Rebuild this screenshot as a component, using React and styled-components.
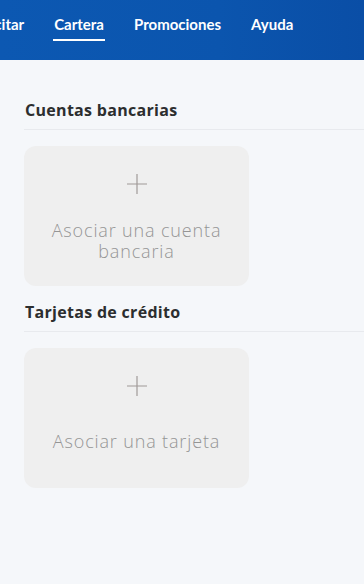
import React from "react";
import styled, { createGlobalStyle } from "styled-components";

const Global = createGlobalStyle`
  html, body { margin: 0; padding: 0; background: #f5f7fa; }
  body { font-family: "Lato", "Noto Sans", sans-serif; }
`;

const Page = styled.div`
  width: 364px;
  min-height: 584px;
  background: #f5f7fa;
  overflow: hidden;
`;

const Header = styled.header`
  height: 60px;
  background: linear-gradient(90deg, #0c58b2 0%, #0b55ae 60%, #0a4ea6 100%);
  overflow: hidden;
`;

const Nav = styled.nav`
  display: flex;
  gap: 30px;
  margin-left: -30px;
  height: 100%;
`;

const NavItem = styled.a`
  position: relative;
  display: flex;
  align-items: flex-start;
  padding-top: 15px;
  color: #ffffff;
  font-size: 15px;
  font-weight: 700;
  white-space: nowrap;
  text-decoration: none;
  line-height: 18px;
  &::after {
    content: "";
    display: ${(p) => (p.$active ? "block" : "none")};
    position: absolute;
    left: -1px;
    right: -1px;
    top: 39px;
    height: 2px;
    background: #ffffff;
  }
`;

const Main = styled.main`
  padding: 40px 0 0 24px;
`;

const Section = styled.section`
  margin-bottom: 16px;
`;

const Title = styled.h2`
  margin: 0;
  padding: 0 0 9px 1px;
  font-family: "Open Sans", "Lato", sans-serif;
  font-size: 16px;
  font-weight: 700;
  letter-spacing: 0.3px;
  color: #2c2e2f;
  line-height: 20px;
  border-bottom: 1px solid #e8eaee;
`;

const Card = styled.button`
  margin-top: 16px;
  width: 225px;
  height: 140px;
  border: none;
  border-radius: 12px;
  background: #efefef;
  display: flex;
  flex-direction: column;
  align-items: center;
  padding: 27px 6px 0;
  box-sizing: border-box;
  cursor: pointer;
  font-family: inherit;
`;

const Plus = styled.svg`
  width: 22px;
  height: 22px;
  flex: none;
`;

const CardText = styled.span`
  margin-top: ${(p) => (p.$single ? "34px" : "25px")};
  font-family: "Open Sans", "Lato", sans-serif;
  font-size: 18px;
  line-height: 21px;
  font-weight: 300;
  color: #959595;
  text-align: center;
  letter-spacing: 0.85px;
`;

const PlusIcon = () => (
  <Plus viewBox="0 0 22 22">
    <path d="M11 1v20M1 11h20" stroke="#a09a98" strokeWidth="1.2" fill="none" />
  </Plus>
);

export default function App() {
  return (
    <Page>
      <Global />
      <Header>
        <Nav>
          <NavItem>Solicitar</NavItem>
          <NavItem $active>Cartera</NavItem>
          <NavItem>Promociones</NavItem>
          <NavItem>Ayuda</NavItem>
        </Nav>
      </Header>
      <Main>
        <Section>
          <Title>Cuentas bancarias</Title>
          <Card>
            <PlusIcon />
            <CardText>Asociar una cuenta<br />bancaria</CardText>
          </Card>
        </Section>
        <Section>
          <Title>Tarjetas de crédito</Title>
          <Card>
            <PlusIcon />
            <CardText $single>Asociar una tarjeta</CardText>
          </Card>
        </Section>
      </Main>
    </Page>
  );
}
